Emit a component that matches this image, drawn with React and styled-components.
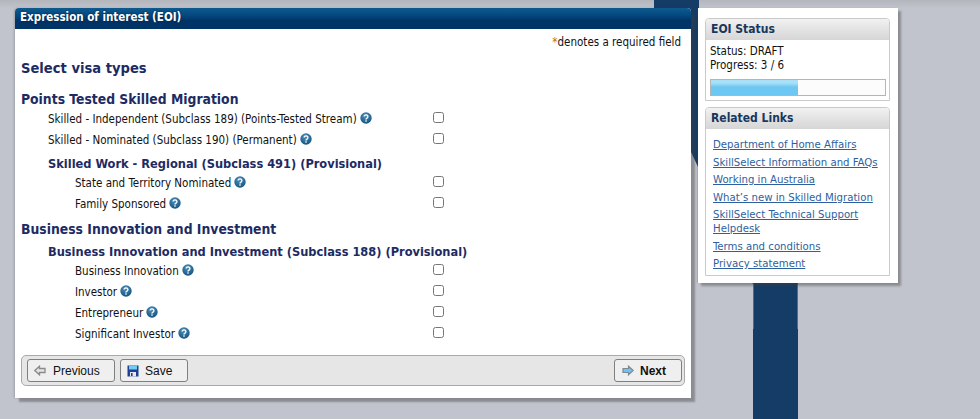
import React from "react";
import styled, { createGlobalStyle } from "styled-components";

const GlobalStyle = createGlobalStyle`
  html, body {
    margin: 0;
    height: 100%;
    background: #c1c4cd;
  }
  body {
    font-family: "DejaVu Sans", Tahoma, sans-serif;
    font-stretch: condensed;
    font-size: 11.5px;
    color: #000;
    overflow: hidden;
  }
`;

const Page = styled.div`
  position: relative;
  display: flex;
  align-items: flex-start;
  width: 980px;
  height: 419px;
  box-sizing: border-box;
  padding: 8px 0 0 15px;
  background: linear-gradient(#b4b6bc 0, #bcbec6 5px, #c1c4cd 8px);
  overflow: hidden;
`;

const BackStripe = styled.div`
  position: absolute;
  inset: 0;
  background: #143c67;
  clip-path: polygon(654px 0, 699px 0, 699px 20px, 798px 20px, 798px 419px, 753px 419px, 753px 284px, 691px 152px, 654px 100px);

  &::after {
    content: "";
    position: absolute;
    left: 753px;
    top: 284px;
    width: 45px;
    height: 45px;
    box-sizing: border-box;
    border: solid rgba(255, 255, 255, 0.25);
    border-width: 0 1px;
  }
`;

const Main = styled.main`
  position: relative;
  width: 676px;
  height: 390px;
  background: #fff;
  border-radius: 4px 4px 0 0;
  box-shadow: 4px 4px 2px rgba(60, 60, 60, 0.4), -1px 0 2px rgba(60, 60, 60, 0.25);
`;

const TitleBar = styled.h1`
  margin: 0;
  height: 21px;
  box-sizing: border-box;
  padding: 2px 0 0 5px;
  border-radius: 4px 4px 0 0;
  background: linear-gradient(#0e5a8e 0, #034a80 7px, #003366 13px);
  color: #fff;
  font-size: 11.5px;
  font-weight: bold;
  line-height: 15px;
  text-shadow: 0 0 2px #001d3d;
`;

const Body = styled.div`
  padding: 0 6px;
`;

const Required = styled.p`
  margin: 0;
  padding: 6px 4px 0 0;
  height: 16px;
  text-align: right;
  line-height: 15px;
  color: #111;
  b {
    color: #b5740f;
    font-weight: normal;
  }
`;

const PageHeading = styled.h2`
  margin: 7px 0 0;
  font-size: 14.6px;
  line-height: 20px;
  color: #1d2b63;
`;

const GroupHeading = styled.h3`
  margin: ${(p) => p.$top}px 0 0;
  font-size: 13.8px;
  line-height: 18px;
  color: #1d2b63;
`;

const SubHeading = styled.h4`
  margin: ${(p) => p.$top}px 0 0 27px;
  font-size: 12.7px;
  line-height: 17px;
  color: #1d2b63;
`;

const Row = styled.div`
  display: flex;
  align-items: center;
  height: 21px;
  padding-left: ${(p) => p.$indent}px;
`;

const RowLabel = styled.label`
  display: flex;
  align-items: center;
  gap: 3px;
  width: ${(p) => 412 - p.$indent}px;
  color: #111;
`;

const Check = styled.input`
  width: 11px;
  height: 11px;
  margin: 0 0 3px;
`;

const HelpGlyph = styled.svg`
  margin-bottom: 2px;
`;

const ToolBar = styled.div`
  position: absolute;
  left: 6px;
  right: 6px;
  bottom: 12px;
  display: flex;
  gap: 5px;
  height: 31px;
  box-sizing: border-box;
  padding: 3px 2px 0 5px;
  background: #e6e6e6;
  border: 1px solid #a9a9a9;
  border-radius: 5px;
`;

const NavButton = styled.button`
  display: flex;
  align-items: center;
  gap: ${(p) => p.$gap}px;
  width: ${(p) => p.$width}px;
  height: 23px;
  box-sizing: border-box;
  padding: 0 0 0 ${(p) => p.$pad}px;
  margin-left: ${(p) => (p.$push ? "auto" : "0")};
  background: #efefef;
  border: 1px solid #7f7f7f;
  border-radius: 3px;
  font-family: "Liberation Sans", Arial, sans-serif;
  font-size: 12px;
  font-weight: ${(p) => (p.$bold ? "bold" : "normal")};
  color: #111;
`;

const Side = styled.aside`
  position: relative;
  width: 200px;
  height: 275px;
  margin-left: 7px;
  box-sizing: border-box;
  padding: 10px 8px 0 7px;
  background: #fff;
  box-shadow: 3px 3px 2px rgba(60, 60, 60, 0.4), -1px 0 1px rgba(60, 60, 60, 0.2);
`;

const Box = styled.section`
  height: ${(p) => p.$height}px;
  box-sizing: border-box;
  margin-bottom: 6px;
  border: 1px solid #cacaca;
  border-radius: 4px 4px 0 0;
`;

const BoxTitle = styled.h3`
  margin: 0;
  height: 21px;
  box-sizing: border-box;
  padding: 2px 0 0 5px;
  background: linear-gradient(#f2f2f2 0, #e6e6e6 8px, #d6d6d6 21px);
  border-radius: 3px 3px 0 0;
  font-size: 12px;
  line-height: 17px;
  color: #17375e;
`;

const StatusText = styled.div`
  padding: 4px 0 0 4px;
  line-height: 14px;
  color: #111;
`;

const Progress = styled.div`
  height: 17px;
  margin: 7px 3px 0 4px;
  box-sizing: border-box;
  border: 1px solid #b5b5b5;
  background: #fcfcfc;
`;

const ProgressFill = styled.div`
  height: 100%;
  background: linear-gradient(#a8e0f8 0, #a8e0f8 3px, #6cc8f2 7px);
`;

const LinkList = styled.ul`
  list-style: none;
  margin: 0;
  padding: 9px 4px 0 7px;
`;

const LinkItem = styled.li`
  margin-bottom: 3.5px;
  font-size: 11.3px;
  line-height: 14px;
  a {
    color: #2f5f9e;
    text-decoration: underline;
  }
`;

const HelpIcon = () => (
  <HelpGlyph width="12" height="12" viewBox="0 0 12 12" aria-hidden="true">
    <defs>
      <radialGradient id="helpFill" cx="0.45" cy="0.3" r="0.8">
        <stop offset="0" stopColor="#4f92b8" />
        <stop offset="1" stopColor="#0b4a7c" />
      </radialGradient>
    </defs>
    <circle cx="6" cy="6" r="5.7" fill="url(#helpFill)" />
    <path d="M4.1 4.6a1.9 1.7 0 1 1 2.9 1.5c-.7.4-1 .7-1 1.4" fill="none" stroke="#fff" strokeWidth="1.3" />
    <rect x="5.3" y="8.3" width="1.4" height="1.4" fill="#fff" />
  </HelpGlyph>
);

const PrevIcon = () => (
  <svg width="12" height="11" viewBox="0 0 12 11" aria-hidden="true">
    <path d="M.8 5.5 5.5 1.2V3.5H11V7.5H5.5V9.8Z" fill="#e4e4e4" stroke="#8a8a8a" strokeWidth="1.3" />
  </svg>
);

const NextIcon = () => (
  <svg width="12" height="11" viewBox="0 0 12 11" aria-hidden="true">
    <path d="M11.2 5.5 6.5 1.2V3.5H1V7.5H6.5V9.8Z" fill="#6cc4f0" stroke="#7d8a96" strokeWidth="1.2" />
  </svg>
);

const SaveIcon = () => (
  <svg width="12" height="12" viewBox="0 0 12 12" aria-hidden="true">
    <path d="M0.5 0.5H11.5V11.5H0.5Z" fill="#1f3f94" />
    <rect x="2" y="0.5" width="8" height="4" fill="#6fcdf0" />
    <rect x="3" y="7" width="6" height="4.5" fill="#e8e8e8" />
    <rect x="4" y="8" width="1.6" height="3" fill="#1f3f94" />
  </svg>
);

const VisaRow = ({ label, indent }) => (
  <Row $indent={indent}>
    <RowLabel $indent={indent}>
      {label}
      <HelpIcon />
    </RowLabel>
    <Check type="checkbox" aria-label={label} />
  </Row>
);

const links = [
  "Department of Home Affairs",
  "SkillSelect Information and FAQs",
  "Working in Australia",
  "What’s new in Skilled Migration",
  "SkillSelect Technical Support Helpdesk",
  "Terms and conditions",
  "Privacy statement",
];

const App = () => (
  <Page>
    <GlobalStyle />
    <BackStripe />
    <Main>
      <TitleBar>Expression of interest (EOI)</TitleBar>
      <Body>
        <Required>
          <b>*</b>denotes a required field
        </Required>
        <PageHeading>Select visa types</PageHeading>

        <GroupHeading $top={12}>Points Tested Skilled Migration</GroupHeading>
        <VisaRow indent={27} label="Skilled - Independent (Subclass 189) (Points-Tested Stream)" />
        <VisaRow indent={27} label="Skilled - Nominated (Subclass 190) (Permanent)" />
        <SubHeading $top={5}>Skilled Work - Regional (Subclass 491) (Provisional)</SubHeading>
        <VisaRow indent={54} label="State and Territory Nominated" />
        <VisaRow indent={54} label="Family Sponsored" />

        <GroupHeading $top={6}>Business Innovation and Investment</GroupHeading>
        <SubHeading $top={5}>Business Innovation and Investment (Subclass 188) (Provisional)</SubHeading>
        <VisaRow indent={54} label="Business Innovation" />
        <VisaRow indent={54} label="Investor" />
        <VisaRow indent={54} label="Entrepreneur" />
        <VisaRow indent={54} label="Significant Investor" />
      </Body>
      <ToolBar>
        <NavButton $width={88} $pad={6} $gap={7}>
          <PrevIcon />
          Previous
        </NavButton>
        <NavButton $width={68} $pad={6} $gap={6}>
          <SaveIcon />
          Save
        </NavButton>
        <NavButton $width={68} $pad={7} $gap={6} $bold $push>
          <NextIcon />
          Next
        </NavButton>
      </ToolBar>
    </Main>
    <Side>
      <Box $height={83}>
        <BoxTitle>EOI Status</BoxTitle>
        <StatusText>
          Status: DRAFT
          <br />
          Progress: 3 / 6
        </StatusText>
        <Progress>
          <ProgressFill style={{ width: `${(3 / 6) * 100}%` }} />
        </Progress>
      </Box>
      <Box $height={169}>
        <BoxTitle>Related Links</BoxTitle>
        <LinkList>
          {links.map((link) => (
            <LinkItem key={link}>
              <a href="#">{link}</a>
            </LinkItem>
          ))}
        </LinkList>
      </Box>
    </Side>
  </Page>
);

export default App;
